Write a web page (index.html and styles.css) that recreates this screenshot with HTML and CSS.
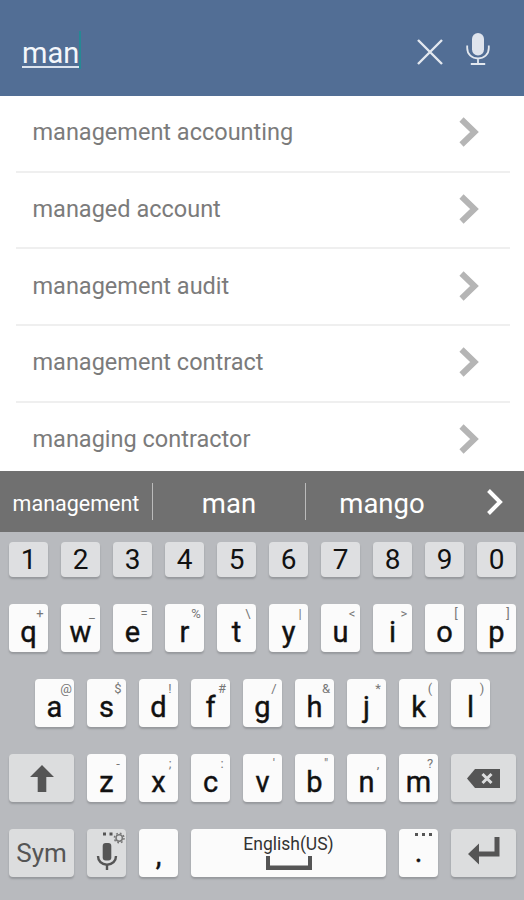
FILE: index.html
```
<!DOCTYPE html>
<html lang="en">
<head>
    <meta charset="UTF-8">
    <title>Search</title>
    <link rel="stylesheet" href="styles.css">
</head>
<body>
    <div class="search-bar">
        <div class="query"><span class="query-text">man</span><span class="caret"></span></div>
        <svg class="clear-icon" viewBox="0 0 28 28"><path d="M2 2L26 26M26 2L2 26"/></svg>
        <svg class="mic-icon" viewBox="0 0 24 34">
            <rect class="mic-body" x="6" y="1" width="12" height="22.5" rx="6"/>
            <path d="M1.2 13.5V16C1.2 22.5 6 26.5 12 26.5S22.8 22.5 22.8 16V13.5M12 26.5V31.8M4.8 32H19.2"/>
        </svg>
    </div>

    <div class="results">
        <div class="result"><span>management accounting</span><svg class="arrow" viewBox="0 0 20 30"><path d="M2.5 2.5L15.5 15L2.5 27.5"/></svg></div>
        <div class="result"><span>managed account</span><svg class="arrow" viewBox="0 0 20 30"><path d="M2.5 2.5L15.5 15L2.5 27.5"/></svg></div>
        <div class="result"><span>management audit</span><svg class="arrow" viewBox="0 0 20 30"><path d="M2.5 2.5L15.5 15L2.5 27.5"/></svg></div>
        <div class="result"><span>management contract</span><svg class="arrow" viewBox="0 0 20 30"><path d="M2.5 2.5L15.5 15L2.5 27.5"/></svg></div>
        <div class="result"><span>managing contractor</span><svg class="arrow" viewBox="0 0 20 30"><path d="M2.5 2.5L15.5 15L2.5 27.5"/></svg></div>
    </div>

    <div class="suggestions">
        <div class="suggestion small">management</div>
        <div class="suggestion">man</div>
        <div class="suggestion">mango</div>
        <svg class="more" viewBox="0 0 18 28"><path d="M2.5 2.5L14 14L2.5 25.5"/></svg>
    </div>

    <div class="keyboard">
        <div class="row numbers">
            <div class="key">1</div>
            <div class="key">2</div>
            <div class="key">3</div>
            <div class="key">4</div>
            <div class="key">5</div>
            <div class="key">6</div>
            <div class="key">7</div>
            <div class="key">8</div>
            <div class="key">9</div>
            <div class="key">0</div>
        </div>
        <div class="row">
            <div class="key">q<span class="hint">+</span></div>
            <div class="key">w<span class="hint">_</span></div>
            <div class="key">e<span class="hint">=</span></div>
            <div class="key">r<span class="hint">%</span></div>
            <div class="key">t<span class="hint">\</span></div>
            <div class="key">y<span class="hint">|</span></div>
            <div class="key">u<span class="hint">&lt;</span></div>
            <div class="key">i<span class="hint">&gt;</span></div>
            <div class="key">o<span class="hint">[</span></div>
            <div class="key">p<span class="hint">]</span></div>
        </div>
        <div class="row">
            <div class="key">a<span class="hint">@</span></div>
            <div class="key">s<span class="hint">$</span></div>
            <div class="key">d<span class="hint">!</span></div>
            <div class="key">f<span class="hint">#</span></div>
            <div class="key">g<span class="hint">/</span></div>
            <div class="key">h<span class="hint">&amp;</span></div>
            <div class="key">j<span class="hint">*</span></div>
            <div class="key">k<span class="hint">(</span></div>
            <div class="key">l<span class="hint">)</span></div>
        </div>
        <div class="row">
            <div class="key gray wide">
                <svg width="24" height="27" viewBox="0 0 24 27"><path d="M12 0L24 12H16.3V27H7.7V12H0Z"/></svg>
            </div>
            <div class="key">z<span class="hint">-</span></div>
            <div class="key">x<span class="hint">;</span></div>
            <div class="key">c<span class="hint">:</span></div>
            <div class="key">v<span class="hint">'</span></div>
            <div class="key">b<span class="hint">"</span></div>
            <div class="key">n<span class="hint">,</span></div>
            <div class="key">m<span class="hint">?</span></div>
            <div class="key gray wide">
                <svg width="33" height="19" viewBox="0 0 33 19"><path d="M0 9.5L8 0H33V19H8Z"/><path class="cross" d="M15.5 5L24.5 14M24.5 5L15.5 14"/></svg>
            </div>
        </div>
        <div class="row">
            <div class="key gray wide sym">Sym</div>
            <div class="key gray">
                <svg class="voice" width="39" height="48" viewBox="0 0 39 48">
                    <rect x="15.7" y="14" width="8.6" height="17.5" rx="3"/>
                    <path class="line" d="M11 27C11 32 14.5 35.7 20 35.7S29 32 29 27M20 35.7V41"/>
                    <path d="M16 3.5H19V6.5H16ZM22.5 3.5H25.5V6.5H22.5Z"/>
                    <circle class="gear" cx="32.2" cy="9" r="3.2"/>
                    <circle class="teeth" cx="32.2" cy="9" r="4.8"/>
                </svg>
            </div>
            <div class="key comma">,</div>
            <div class="key space">
                <span>English(US)</span>
                <svg width="46" height="14" viewBox="0 0 46 14"><path d="M0 0H4V9.5H42V0H46V14H0Z"/></svg>
            </div>
            <div class="key period">.<svg class="dots" width="17" height="3" viewBox="0 0 17 3"><path d="M0 0H3V3H0ZM7 0H10V3H7ZM14 0H17V3H14Z"/></svg></div>
            <div class="key gray wide enter">
                <svg width="32" height="28" viewBox="0 0 32 28"><path d="M0 17L11 6.5V14.5H26.5V0H31.5V19.5H11V27.5Z"/></svg>
            </div>
        </div>
    </div>
</body>
</html>
```

FILE: styles.css
```
body {
    margin: 0;
    height: 900px;
    overflow: hidden;
    font-family: Roboto, sans-serif;
    background: #fff;
}
.search-bar {
    display: flex;
    align-items: center;
    height: 96px;
    padding: 0 34px 0 22px;
    box-sizing: border-box;
    background: #526e95;
}
.query {
    display: flex;
    flex: 1;
    align-items: center;
    height: 40px;
    padding-top: 6px;
    color: #f4f7fb;
    font-size: 29px;
}
.query-text {
    height: 31px;
    margin-top: 1px;
    line-height: 36px;
    border-bottom: 2px solid #dce4ef;
}
.caret {
    width: 2px;
    height: 38px;
    margin-bottom: 2px;
    background: #278894;
}
.clear-icon, .mic-icon {
    fill: none;
    stroke: #e3e8ef;
    stroke-width: 2.4;
}
.clear-icon {
    width: 28px;
    height: 28px;
    margin: 7px 22px 0 0;
}
.mic-icon {
    width: 24px;
    height: 34px;
    margin-top: 2px;
    stroke-width: 1.8;
}
.mic-body {
    fill: #dfe4ed;
    stroke: none;
}
.results {
    height: 375px;
    padding: 0 14px 0 16px;
    overflow: hidden;
}
.result {
    display: flex;
    align-items: center;
    justify-content: space-between;
    height: 76.7px;
    padding: 0 31px 2px 16.5px;
    box-sizing: border-box;
    border-bottom: 2px solid #efefef;
    color: #7b7b7b;
    font-size: 23.5px;
}
.arrow {
    width: 20px;
    height: 30px;
    fill: none;
    stroke: #b5b5b5;
    stroke-width: 6;
}
.suggestions {
    display: flex;
    align-items: center;
    height: 61px;
    background: #707070;
    color: #fff;
}
.suggestion {
    width: 152px;
    height: 37px;
    line-height: 41px;
    border-right: 1px solid #bbb;
    font-size: 27.5px;
    text-align: center;
}
.suggestion.small {
    font-size: 21.5px;
}
.suggestion:nth-child(3) {
    border: 0;
}
.more {
    width: 18px;
    height: 28px;
    margin-left: 28px;
    fill: none;
    stroke: #fff;
    stroke-width: 4;
}
.keyboard {
    display: flex;
    flex-direction: column;
    gap: 27px;
    height: 368px;
    padding-top: 10px;
    box-sizing: border-box;
    background: #b8babe;
}
.row {
    display: flex;
    justify-content: center;
    gap: 13px;
    height: 48px;
    padding-left: 1px;
}
.key {
    position: relative;
    display: flex;
    align-items: center;
    justify-content: center;
    width: 39px;
    height: 48px;
    padding-top: 8px;
    box-sizing: border-box;
    border-radius: 4px;
    background: #fbfbfb;
    box-shadow: 0 2px 2px #96989c;
    color: #111;
    font-size: 29px;
    line-height: 34px;
    -webkit-text-stroke: 0.4px #111;
}
.numbers, .numbers .key {
    height: 35px;
}
.numbers .key {
    padding: 0;
    background: #dedfe1;
    font-size: 28px;
    -webkit-text-stroke: 0;
}
.key.gray {
    padding: 0;
    background: #dcddde;
}
.key.wide {
    width: 65px;
}
.key svg {
    fill: #555;
}
.hint {
    position: absolute;
    top: 2px;
    right: 0;
    width: 16px;
    color: #777;
    font-size: 13px;
    line-height: 15px;
    text-align: center;
    -webkit-text-stroke: 0;
}
.cross {
    stroke: #dcddde;
    stroke-width: 3;
}
.key.sym {
    color: #555;
    font-size: 26px;
    -webkit-text-stroke: 0;
}
.key .line {
    fill: none;
    stroke: #555;
    stroke-width: 2.4;
}
.key .gear, .key .teeth {
    fill: none;
    stroke: #777;
    stroke-width: 1.5;
}
.key .teeth {
    stroke-dasharray: 1.8 1.97;
}
.key.comma {
    padding-top: 4px;
}
.key.period {
    padding: 0 0 2px;
}
.key.enter {
    padding-bottom: 4px;
}
.key.space {
    flex-direction: column;
    gap: 2px;
    width: 195px;
    padding: 0 0 2px;
    color: #333;
    font-size: 17.5px;
    line-height: 20px;
    -webkit-text-stroke: 0;
}
.dots {
    position: absolute;
    top: 4px;
    right: 6px;
}
```
